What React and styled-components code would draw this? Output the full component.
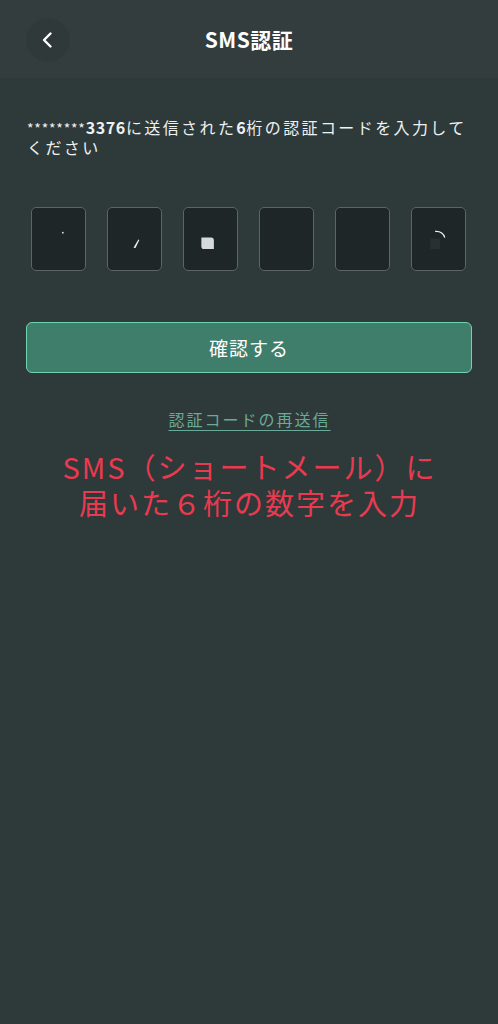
import styled, { createGlobalStyle } from "styled-components"

const GlobalStyle = createGlobalStyle`
  html, body {
    margin: 0;
    padding: 0;
    background: #2e3939;
  }
  body {
    font-family: "Noto Sans CJK JP", "Noto Sans", sans-serif;
    color: #f2f4f4;
  }
`

// tiny leftovers of the masked digits inside each box
const marks = [
  <circle cx="32" cy="25" r="0.9" fill="#e9eded" />,
  <path d="M26.5 40.5 L31.5 32 L32.5 32.6 L28.5 40.8 Z" fill="#f2f4f4" />,
  <path d="M18 30 H28 Q31 30 31 33 V42 H21 Q18 42 18 39 Z" fill="#d6dadb" />,
  null,
  null,
  <>
    <rect x="19" y="31" width="10" height="11" fill="#283131" />
    <path d="M24 23.5 Q32 23 34 30" stroke="#eef1f1" strokeWidth="1.3" fill="none" />
  </>,
]

function CodeBoxes() {
  return (
    <Boxes>
      {marks.map((m, i) => (
        <Box key={i}>
          <svg viewBox="0 0 55 63" width="100%" height="100%">{m}</svg>
        </Box>
      ))}
    </Boxes>
  )
}

function App() {
  return (
    <>
      <GlobalStyle />
      <Screen>
        <Header>
          <BackButton aria-label="back">
            <svg width="16" height="18" viewBox="0 0 16 18">
              <path d="M10.5 2.5 L4 9 L10.5 15.5" stroke="#ffffff" strokeWidth="2.4" fill="none" strokeLinecap="round" strokeLinejoin="round" />
            </svg>
          </BackButton>
          <Title>SMS認証</Title>
          <span />
        </Header>
        <Body>
          <Lead>
            <Mask>********</Mask><Num>3376</Num>に送信された<Num>6</Num>桁の認証コードを入力してください
          </Lead>
          <CodeBoxes />
          <ConfirmButton>確認する</ConfirmButton>
          <Resend>認証コードの再送信</Resend>
          <Note>
            SMS（ショートメール）に<br />届いた６桁の数字を入力
          </Note>
        </Body>
      </Screen>
    </>
  )
}

export default App

const Screen = styled.div`
  min-height: 1024px;
  background: #2e3939;
`
const Header = styled.div`
  height: 78px;
  display: grid;
  grid-template-columns: 44px 1fr 44px;
  align-items: center;
  padding: 0 26px 0 26px;
  background: #333d3e;
`
const BackButton = styled.div`
  width: 44px;
  height: 44px;
  border-radius: 50%;
  background: #2f3939;
  display: flex;
  align-items: center;
  justify-content: center;
  margin-top: 2px;
`
const Title = styled.h1`
  margin: 0;
  text-align: center;
  font-size: 21px;
  font-weight: 700;
  letter-spacing: 0.5px;
  color: #ffffff;
`
const Body = styled.div`
  padding: 40px 26px 0 27px;
  display: flex;
  flex-direction: column;
`
const Lead = styled.p`
  margin: 0;
  font-size: 16px;
  line-height: 19px;
  letter-spacing: 2.4px;
  color: #eef1f1;
`
const Mask = styled.span`
  letter-spacing: 0.8px;
  font-size: 14px;
`
const Num = styled.span`
  font-weight: 700;
  letter-spacing: 0.6px;
`
const Boxes = styled.div`
  margin-top: 50px;
  display: flex;
  gap: 21px;
  padding-left: 4px;
`
const Box = styled.div`
  width: 55px;
  height: 64px;
  box-sizing: border-box;
  border: 1.5px solid #5b6565;
  border-radius: 5px;
  background: #1e2627;
`
const ConfirmButton = styled.div`
  margin-top: 51px;
  margin-left: -1px;
  height: 51px;
  box-sizing: border-box;
  border: 1.5px solid #72d4ae;
  border-radius: 6px;
  background: #3f7e6b;
  display: flex;
  align-items: center;
  justify-content: center;
  font-size: 19px;
  letter-spacing: 1px;
  color: #ffffff;
`
const Resend = styled.div`
  margin-top: 34px;
  align-self: center;
  font-size: 16px;
  line-height: 24px;
  letter-spacing: 2px;
  color: #6aaa98;
  text-decoration: underline;
  text-underline-offset: 4px;
`
const Note = styled.div`
  margin-top: 17px;
  text-align: center;
  font-size: 29px;
  line-height: 36px;
  letter-spacing: 2px;
  color: #ea3a50;
`
